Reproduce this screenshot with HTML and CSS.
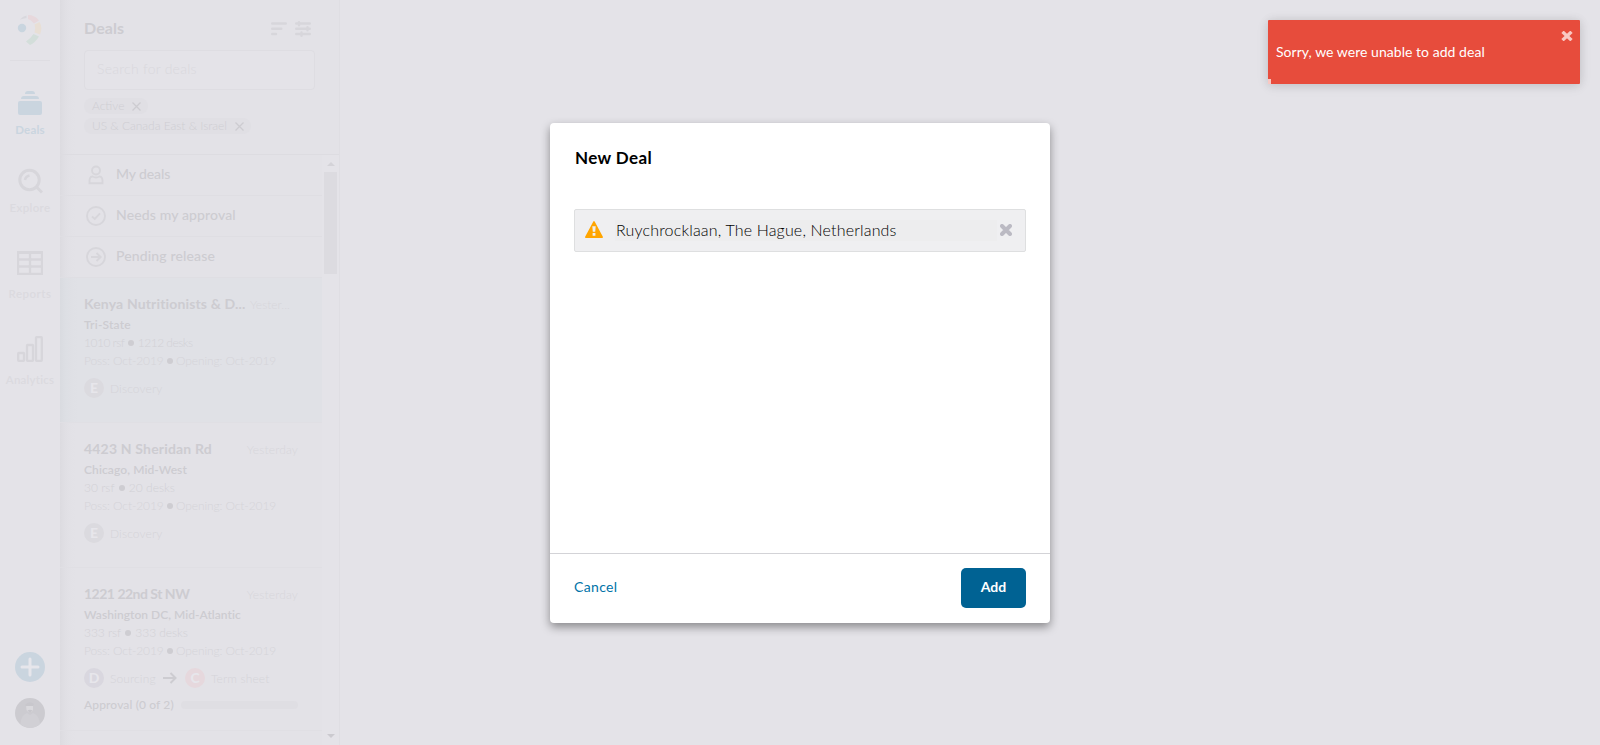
FILE: index.html
```
<!DOCTYPE html>
<html lang="en">
<head>
<meta charset="utf-8">
<title>Deals</title>
<link rel="stylesheet" href="styles.css">
</head>
<body>
<div class="app">
  <nav class="rail">
    <svg class="logo" width="26" height="32" viewBox="0 0 26 32">
      <path d="M3 5.500Q6 2 9.500 1.500V4Q6 4.500 3 5.500Z" fill="#d8d8dd"/>
      <path d="M11 1Q18 1 22 6.500L17 9.500Q14 5.500 11 5Z" fill="#e7d8dc"/>
      <path d="M22.500 8Q26 14 23 20.500L17.500 18.500Q19 14 17.500 10.500Z" fill="#e8dfd5"/>
      <path d="M16.500 20L22 22.500Q18 29 13 31L9 27.500Q14 24 16.500 20Z" fill="#d3deda"/>
      <circle cx="5" cy="14" r="4.200" fill="#c9d5df"/>
    </svg>
    <div class="rail-line"></div>
    <a class="nav nav-deals"><svg width="24" height="24" viewBox="0 0 24 24" fill="#cad5df"><path d="M7 3Q7 0 10 0H14Q17 0 17 3ZM3 8Q3 5 6 5H18Q21 5 21 8Z"/><rect y="10" width="24" height="14" rx="2"/></svg><span>Deals</span></a>
    <a class="nav nav-explore"><svg width="26" height="26" viewBox="0 0 26 26" fill="none" stroke="#d7d6db"><circle cx="12.500" cy="12" r="9.700" stroke-width="3"/><path d="M19 18.500L25 24.500" stroke-width="3"/><path d="M8 12Q8.500 8.500 12.500 7.500" stroke-width="2.500"/></svg><span>Explore</span></a>
    <a class="nav nav-reports"><svg width="26" height="24" viewBox="0 0 26 24" fill="none" stroke="#d7d6db" stroke-width="2"><path d="M1 1.500H25V23H1ZM1 8.500H25M1 15.500H25M13 1V23" stroke-width="2.300"/><path d="M0 1.500H26" stroke-width="3"/></svg><span>Reports</span></a>
    <a class="nav nav-analytics"><svg width="26" height="26" viewBox="0 0 26 26" fill="none" stroke="#d7d6db" stroke-width="2.300"><rect x="1.200" y="17" width="5.800" height="7.800" rx=".5"/><rect x="10" y="9" width="6" height="15.800" rx=".5"/><rect x="19" y="1.200" width="5.800" height="23.600" rx=".5"/></svg><span>Analytics</span></a>
    <div class="rail-foot">
      <svg width="30" height="30" viewBox="0 0 30 30"><circle cx="15" cy="15" r="15" fill="#cad5df"/><path d="M15 7V23M7 15H23" stroke="#e6e6eb" stroke-width="3" stroke-linecap="round"/></svg>
      <svg width="30" height="30" viewBox="0 0 30 30"><circle cx="15" cy="15" r="15" fill="#cccbd0"/><path d="M5.500 26Q6 17 12 15L15 17L18 15Q24 17 25 26Q15 34 5.500 26Z" fill="#d1d0d5"/><path d="M11 7Q14 4 18 6V12Q15 17 11.500 12Z" fill="#dad9dd"/><path d="M10 7Q14 2 19 6L18 8H11ZM12.500 12.500Q15 11 17.500 12.500L15 15Z" fill="#c8c7cc"/></svg>
    </div>
  </nav>

  <aside class="panel">
    <header class="panel-head">
      <div class="head-row">
        <h1>Deals</h1>
        <svg class="sort" width="16" height="16" viewBox="0 0 16 16" stroke="#d7d6db" stroke-width="2.400" stroke-linecap="round"><path d="M1.200 2.500H14.800M1.200 7.800H10.300M1.200 13H5"/></svg>
        <svg width="16" height="16" viewBox="0 0 16 16" stroke="#d7d6db" stroke-width="2.400" stroke-linecap="round"><path d="M1.200 2.500H14.800M1.200 7.800H14.800M1.200 13H14.800M4 1.200V4.200M12.500 6.200V9.300M6.500 11.500V14.700"/></svg>
      </div>
      <div class="search"><span>Search for deals</span></div>
      <div class="chips">
        <div class="chip"><span class="chip-active">Active</span><svg width="9" height="9" viewBox="0 0 9 9"><path d="M.5 .5L8.500 8.500M8.500 .5L.5 8.500" stroke="#cdccd1" stroke-width="1.300"/></svg></div>
        <div class="chip"><span class="chip-region">US &amp; Canada East &amp; Israel</span><svg width="9" height="9" viewBox="0 0 9 9"><path d="M.5 .5L8.500 8.500M8.500 .5L.5 8.500" stroke="#cdccd1" stroke-width="1.300"/></svg></div>
      </div>
    </header>
    <div class="panel-body">
      <div class="list">
        <div class="filter"><svg width="20" height="20" viewBox="0 0 20 20" fill="none" stroke="#d7d6db" stroke-width="1.900"><circle cx="10" cy="5.500" r="4"/><path d="M6.500 11.500Q10 13.500 13.500 11.500Q17 11.500 16.500 18.200H3.500Q3 11.500 6.500 11.500Z"/></svg><span class="f1">My deals</span></div>
        <div class="filter"><svg width="20" height="20" viewBox="0 0 20 20" fill="none" stroke="#d7d6db" stroke-width="1.900"><circle cx="10" cy="10" r="9"/><path d="M6 10.500L8.800 13L14 7.300"/></svg><span class="f2">Needs my approval</span></div>
        <div class="filter"><svg width="20" height="20" viewBox="0 0 20 20" fill="none" stroke="#d7d6db" stroke-width="1.900"><circle cx="10" cy="10" r="9"/><path d="M5 10H14.500M10.500 6L14.700 10L10.500 14"/></svg><span class="f3">Pending release</span></div>

        <article class="card selected">
          <div class="title-row"><h2 class="t1">Kenya Nutritionists &amp; D...</h2><time class="short">Yester...</time></div>
          <p class="place p1">Tri-State</p>
          <p class="size s1">1010 rsf <i></i> 1212 desks</p>
          <p class="dates">Poss: Oct-2019 <i></i> Opening: Oct-2019</p>
          <div class="stage"><b>E</b><span class="disc">Discovery</span></div>
        </article>
        <article class="card">
          <div class="title-row"><h2 class="t2">4423 N Sheridan Rd</h2><time>Yesterday</time></div>
          <p class="place p2">Chicago, Mid-West</p>
          <p class="size s2">30 rsf <i></i> 20 desks</p>
          <p class="dates">Poss: Oct-2019 <i></i> Opening: Oct-2019</p>
          <div class="stage"><b>E</b><span class="disc">Discovery</span></div>
        </article>
        <article class="card last">
          <div class="title-row"><h2 class="t3">1221 22nd St NW</h2><time>Yesterday</time></div>
          <p class="place p3">Washington DC, Mid-Atlantic</p>
          <p class="size s3">333 rsf <i></i> 333 desks</p>
          <p class="dates">Poss: Oct-2019 <i></i> Opening: Oct-2019</p>
          <div class="stage"><b class="violet">D</b><span class="src">Sourcing</span><svg class="arrow" width="14" height="12" viewBox="0 0 14 12" fill="none" stroke="#cdccd1" stroke-width="2"><path d="M0 6H12.500M7.500 1L12.500 6L7.500 11"/></svg><b class="red">C</b><span class="term">Term sheet</span></div>
          <div class="approval"><span>Approval (0 of 2)</span><div class="bar"></div></div>
        </article>
      </div>
      <div class="scroll"><div class="up"></div><div class="thumb"></div><div class="down"></div></div>
    </div>
  </aside>
</div>

<section class="modal">
  <div class="modal-main">
    <h3>New Deal</h3>
    <div class="field">
      <svg class="warn" width="18" height="17" viewBox="0 0 18 17"><path d="M9 .8L17.200 16.200H.8Z" fill="#ffa500" stroke="#ffa500" stroke-width="1.500" stroke-linejoin="round"/><path d="M7.300 5.200H10.700L10.200 10.800H7.800ZM7.600 12H10.400V14.800H7.600Z" fill="#efeff1"/></svg>
      <div class="value"><span>Ruychrocklaan, The Hague, Netherlands</span></div>
      <svg class="clear" width="12" height="12" viewBox="0 0 12 12"><path d="M2 2L10 10M10 2L2 10" stroke="#bbbac3" stroke-width="4" stroke-linecap="round"/></svg>
    </div>
  </div>
  <footer><a>Cancel</a><button><span>Add</span></button></footer>
</section>

<div class="toast">
  <span>Sorry, we were unable to add deal</span>
  <svg width="12" height="10" viewBox="0 0 12 10"><path d="M1.500 .8L10.500 9.200M10.500 .8L1.500 9.200" stroke="#f9c8c3" stroke-width="3.300"/></svg>
  <div class="progress"></div>
</div>
</body>
</html>
```
FILE: styles.css
```
* { box-sizing: border-box; }
body { margin: 0; width: 1600px; height: 745px; overflow: hidden; background: #e4e3e8; font-family: Lato, "Open Sans", sans-serif; white-space: nowrap; }
h1, h2, h3, p { margin: 0; }
svg { display: block; flex: none; }

.app { display: flex; height: 745px; }
.rail { display: flex; flex-direction: column; align-items: center; width: 60px; height: 745px; }
.logo { margin-top: 14px; }
.rail-line { width: 40px; height: 1px; margin-top: 14px; background: #dedde2; }
.nav { display: flex; flex-direction: column; align-items: center; font-size: 11.5px; line-height: 16px; font-weight: 600; color: #dbdadf; }
.nav-deals { margin-top: 30px; gap: 7px; height: 77px; color: #cad5df; font-weight: 700; }
.nav-deals span { letter-spacing: .2px; }
.nav-explore { gap: 6px; height: 83px; }
.nav-explore span { letter-spacing: .35px; }
.nav-reports { gap: 11px; height: 85px; }
.nav-reports span { letter-spacing: .5px; }
.nav-analytics { gap: 10px; }
.nav-analytics span { letter-spacing: .2px; }
.rail-foot { display: flex; flex-direction: column; gap: 16px; margin: auto 0 17px; }

.panel { width: 280px; height: 745px; border-right: 1px solid #dfdee3; background: linear-gradient(90deg, #dcdbe0 0, #e0dfe4 5px, #e2e1e6 9px, #e3e2e7 16px); display: flex; flex-direction: column; }
.panel-head { height: 155px; padding: 18px 24px 0; border-bottom: 1px solid #dddce1; }
.head-row { display: flex; align-items: center; height: 22px; padding-right: 4px; }
.head-row h1 { font-size: 16px; line-height: 22px; letter-spacing: .1px; color: #cdccd1; flex: 1; padding-bottom: 3px; }
.sort { margin-right: 8px; }
.search { display: flex; align-items: center; width: 231px; height: 40px; margin-top: 10px; padding: 0 0 3px 12px; border: 1px solid #dedde2; border-radius: 4px; background: #e4e3e8; font-size: 14px; font-weight: 300; letter-spacing: .25px; color: #d9d8dd; }
.chips { display: flex; flex-direction: column; align-items: flex-start; gap: 4px; margin-top: 8px; }
.chip { display: flex; align-items: center; gap: 7px; height: 16px; padding: 0 7px 0 8px; border-radius: 8px; background: #e0dfe4; font-size: 12px; line-height: 16px; font-weight: 300; color: #cfced3; }
.chip-active { width: 33px; }
.chip-region { width: 136px; letter-spacing: -.03px; }
.panel-body { display: flex; flex: 1; min-height: 0; }
.list { width: 262px; }
.filter { display: flex; align-items: center; gap: 10px; height: 41px; padding-left: 26px; border-bottom: 1px solid #dfdee3; font-size: 14px; font-weight: 500; color: #cdccd1; }
.filter span { padding-bottom: 3px; }
.f1 { letter-spacing: -.12px; }
.f2 { letter-spacing: .14px; }
.f3 { letter-spacing: .14px; }
.card { height: 145px; padding: 16px 24px 0; border-bottom: 1px solid #e0dfe4; color: #d2d1d6; font-size: 12px; line-height: 18px; font-weight: 300; }
.selected { background: linear-gradient(90deg, #d9dbe0 0, #dddfe4 6px, #dfe0e5 12px, #e0e1e6 18px); }
.last { height: 163px; }
.title-row { display: flex; justify-content: space-between; align-items: center; height: 20px; }
.title-row h2 { font-size: 14px; line-height: 20px; color: #cdccd1; }
.t1 { letter-spacing: .15px; }
.t2 { letter-spacing: .18px; }
.t3 { letter-spacing: -.5px; }
.title-row time { color: #d7d6db; font-size: 12px; letter-spacing: .15px; padding-top: 1px; }
.title-row .short { width: 41px; margin-right: 7px; letter-spacing: 0; }
.place { margin-top: 2px; font-weight: 600; color: #cdccd1; }
.p1 { letter-spacing: .2px; }
.p2 { letter-spacing: .1px; }
.p3 { letter-spacing: .03px; }
.s1 { letter-spacing: -.5px; }
.s3 { letter-spacing: -.05px; }
.dates { color: #d5d4d9; letter-spacing: -.1px; }
.card i { display: inline-block; width: 6px; height: 6px; margin: 0 1px; border-radius: 50%; background: #cecdd2; vertical-align: 1px; }
.dates i { margin: 0; }
.stage { display: flex; align-items: center; height: 20px; margin-top: 8px; color: #d5d4d9; }
.stage span { padding-top: 2px; letter-spacing: .13px; }
.stage b { width: 20px; height: 20px; margin-right: 6px; border-radius: 50%; background: #dbdadf; color: #e7e6eb; font-size: 14px; font-weight: 900; line-height: 20px; text-align: center; flex: none; }
.stage .src { width: 45px; }
.stage .violet { background: #d9d7df; }
.stage .red { background: #e6d8dd; }
.arrow { margin: 0 8px; }
.approval { display: flex; align-items: center; height: 18px; margin-top: 8px; font-weight: 500; color: #cdccd1; }
.approval span { width: 97px; letter-spacing: .13px; }
.bar { flex: 1; height: 8px; border-radius: 4px; background: #dfdee3; }
.scroll { display: flex; flex-direction: column; width: 17px; padding: 7px 2px 7px; align-items: center; background: #e4e3e8; }
.up { border: 4px solid transparent; border-top: 0; border-bottom-color: #d4d3d8; }
.thumb { width: 13px; height: 102px; margin-top: 6px; background: #dcdbe0; }
.down { margin-top: auto; border: 4px solid transparent; border-bottom: 0; border-top-color: #cbcacf; }

.modal { position: absolute; left: 550px; top: 123px; width: 500px; height: 500px; display: flex; flex-direction: column; border-radius: 4px; background: #fff; box-shadow: 0 4px 10px rgba(0, 0, 0, .4); }
.modal-main { flex: 1; padding: 24px; }
.modal h3 { font-size: 17px; line-height: 22px; letter-spacing: .4px; color: #000; padding-left: 1px; }
.field { display: flex; align-items: center; height: 43px; margin-top: 40px; padding: 0 13px 1px 10px; border: 1px solid #dedfe0; border-radius: 2px; background: #efeff1; }
.warn { margin-top: -2px; }
.value { width: 386px; height: 21px; margin-left: 12px; background: #ededee; font-size: 16px; line-height: 20px; font-weight: 300; letter-spacing: .17px; color: #000; }
.value span { margin-left: 1px; }
.clear { margin-left: 3px; }
.modal footer { display: flex; justify-content: space-between; align-items: center; height: 70px; padding: 0 24px 2px; border-top: 1px solid #d3d3d7; font-size: 14px; }
.modal a { color: #0073a8; letter-spacing: .35px; padding-bottom: 2px; }
.modal button { width: 65px; height: 40px; padding: 0 0 2px; border: 0; border-radius: 5px; background: #006293; color: #fff; font: 700 14px Lato, sans-serif; }

.toast { position: absolute; left: 1268px; top: 20px; width: 312px; height: 64px; display: flex; align-items: center; justify-content: space-between; padding: 0 7px 0 8px; border-radius: 1px; background: #e74c3c; color: #fff; font-size: 14px; box-shadow: 0 1px 10px rgba(0, 0, 0, .12), 0 2px 15px rgba(0, 0, 0, .06); }
.toast span { padding-bottom: 2px; letter-spacing: .04px; }
.toast svg { align-self: flex-start; margin-top: 11px; }
.progress { position: absolute; left: 0; bottom: 0; width: 3px; height: 5px; background: #f9c8c3; }
```
